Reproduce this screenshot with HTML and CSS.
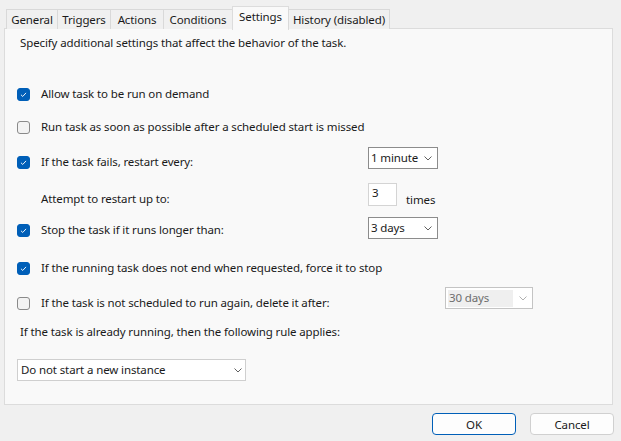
FILE: index.html
```html
<!DOCTYPE html>
<html>
<head>
<meta charset="utf-8">
<link rel="stylesheet" href="styles.css">
</head>
<body>
<div class="dialog">
  <div class="tabs">
    <div class="tab t-general">General</div>
    <div class="tab t-triggers">Triggers</div>
    <div class="tab t-actions">Actions</div>
    <div class="tab t-conditions">Conditions</div>
    <div class="tab t-settings active">Settings</div>
    <div class="tab t-history">History (disabled)</div>
  </div>
  <div class="panel">
    <div class="desc">Specify additional settings that affect the behavior of the task.</div>

    <div class="row r-allow">
      <label class="check"><span class="box on"><svg viewBox="0 0 13 13"><path d="M3.5 6.8 L5.6 8.8 L9.5 4.6"/></svg></span>Allow task to be run on demand</label>
    </div>

    <div class="row r-run">
      <label class="check"><span class="box"></span>Run task as soon as possible after a scheduled start is missed</label>
    </div>

    <div class="row ctl r-fails">
      <label class="check lead off5"><span class="box on"><svg viewBox="0 0 13 13"><path d="M3.5 6.8 L5.6 8.8 L9.5 4.6"/></svg></span>If the task fails, restart every:</label>
      <div class="select small"><span>1 minute</span><svg class="chev" viewBox="0 0 8 5"><path d="M0.5 0.5 L4 4 L7.5 0.5"/></svg></div>
    </div>

    <div class="row ctl r-attempt">
      <div class="plain lead off6">Attempt to restart up to:</div>
      <div class="num">3</div>
      <div class="times">times</div>
    </div>

    <div class="row ctl r-stop">
      <label class="check lead off3"><span class="box on"><svg viewBox="0 0 13 13"><path d="M3.5 6.8 L5.6 8.8 L9.5 4.6"/></svg></span>Stop the task if it runs longer than:</label>
      <div class="select small"><span>3 days</span><svg class="chev" viewBox="0 0 8 5"><path d="M0.5 0.5 L4 4 L7.5 0.5"/></svg></div>
    </div>

    <div class="row r-force">
      <label class="check"><span class="box on"><svg viewBox="0 0 13 13"><path d="M3.5 6.8 L5.6 8.8 L9.5 4.6"/></svg></span>If the running task does not end when requested, force it to stop</label>
    </div>

    <div class="row ctl r-delete">
      <label class="check lead wide off6"><span class="box"></span>If the task is not scheduled to run again, delete it after:</label>
      <div class="select disabled"><span class="hl">30 days</span><svg class="chev" viewBox="0 0 8 5"><path d="M0.5 0.5 L4 4 L7.5 0.5"/></svg></div>
    </div>

    <div class="rule">If the task is already running, then the following rule applies:</div>

    <div class="select big"><span>Do not start a new instance</span><svg class="chev" viewBox="0 0 8 5"><path d="M0.5 0.5 L4 4 L7.5 0.5"/></svg></div>
  </div>
  <div class="buttons">
    <button class="btn primary">OK</button>
    <button class="btn">Cancel</button>
  </div>
</div>
</body>
</html>
```

FILE: styles.css
```css
* { box-sizing: border-box; }
html, body { margin: 0; padding: 0; }
body {
  background: #f0f0f0;
  font-family: "Noto Sans", "Open Sans", sans-serif;
  font-size: 11.5px;
  letter-spacing: -0.12px;
  color: #1a1a1a;
  width: 621px;
  height: 441px;
  overflow: hidden;
}
.dialog { padding: 0; }

.tabs {
  display: flex;
  align-items: flex-end;
  height: 29px;
  padding-left: 6px;
  position: relative;
  z-index: 2;
}
.tab {
  height: 20px;
  border: 1px solid #d9d9d9;
  border-bottom: none;
  background: #f0f0f0;
  margin-left: -1px;
  display: flex;
  align-items: center;
  justify-content: center;
  line-height: 16px;
  white-space: nowrap;
  padding-top: 1px;
}
.tab:first-child { margin-left: 0; }
.tab.active {
  height: 24px;
  background: #f9f9f9;
  margin-bottom: -1px;
  padding-top: 0;
  padding-bottom: 3px;
  border-color: #dcdcdc;
}
.t-general { width: 52px; }
.t-triggers { width: 54px; }
.t-actions { width: 54px; }
.t-conditions { width: 70px; }
.t-settings { width: 57px; }
.t-history { width: 102px; }

.panel {
  margin-left: 4px;
  width: 609px;
  height: 377px;
  margin-top: -1px;
  background: #f9f9f9;
  border: 1px solid #dcdcdc;
  position: relative;
  z-index: 1;
}
.desc {
  margin-top: 4px;
  height: 20px;
  line-height: 20px;
  padding-left: 15px;
}
.row {
  display: flex;
  align-items: center;
  height: 20px;
  padding-left: 12px;
}
.row.ctl { height: 22px; align-items: flex-start; }
.check {
  display: flex;
  align-items: center;
  height: 20px;
  line-height: 20px;
  white-space: nowrap;
}
.lead { flex: 0 0 351px; }
.lead.wide { flex-basis: 428px; }
.plain { padding-left: 24px; height: 20px; line-height: 20px; }
.off3 { margin-top: 3px; }
.off5 { margin-top: 5px; }
.off6 { margin-top: 6px; }

.box {
  width: 13px;
  height: 13px;
  border: 1px solid #8a8a8a;
  border-radius: 3px;
  background: #f3f3f3;
  margin-right: 11px;
  flex: 0 0 13px;
  display: flex;
}
.box.on { background: #005fb8; border-color: #005fb8; }
.box svg { width: 11px; height: 11px; }
.box svg path { fill: none; stroke: #ffffff; stroke-width: 1.1; }

.r-allow { margin-top: 31px; }
.r-run { margin-top: 13px; }
.r-fails { margin-top: 10px; }
.r-attempt { margin-top: 14px; }
.r-stop { margin-top: 12px; }
.r-force { margin-top: 19px; }
.r-delete { margin-top: 9px; }

.select {
  height: 22px;
  border: 1px solid #8c8c8c;
  background: #ffffff;
  display: flex;
  align-items: center;
  justify-content: space-between;
  padding: 0 5px 0 2px;
  line-height: 16px;
}
.select.small { width: 70px; }
.chev { width: 8px; height: 5px; flex: 0 0 8px; }
.chev path { fill: none; stroke: #606060; stroke-width: 1; }
.select.disabled {
  width: 88px;
  border-color: #c4c4c4;
  padding-left: 2px;
  color: #6d6d6d;
}
.select.disabled .hl {
  background: #efefef;
  width: 65px;
  height: 17px;
  display: flex;
  align-items: center;
  padding-left: 1px;
}
.select.disabled .chev path { stroke: #b0b0b0; }
.select.big {
  margin-left: 12px;
  margin-top: 17px;
  width: 229px;
  border-color: #cfcfcf;
  padding-left: 3px;
  padding-right: 3px;
}

.num {
  width: 29px;
  height: 23px;
  border: 1px solid #d4d4d4;
  background: #ffffff;
  padding-left: 3px;
  line-height: 18px;
}
.times { margin-left: 9px; margin-top: 7px; line-height: 20px; height: 20px; }

.rule {
  margin-top: 13px;
  height: 20px;
  line-height: 20px;
  padding-left: 15px;
}

.buttons {
  display: flex;
  justify-content: flex-end;
  gap: 14px;
  padding-right: 7px;
  margin-top: 8px;
}
.btn {
  width: 84px;
  height: 22px;
  border: 1px solid #d0d0d0;
  border-radius: 4px;
  background: #fdfdfd;
  font-family: "Noto Sans", "Open Sans", sans-serif;
  font-size: 11.5px;
  letter-spacing: -0.12px;
  color: #1a1a1a;
  padding: 0;
}
.btn.primary { border-color: #005fb8; }
```
